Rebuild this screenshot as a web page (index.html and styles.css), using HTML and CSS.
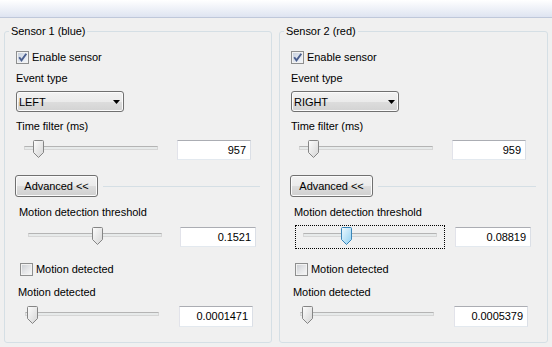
FILE: index.html
```html
<!DOCTYPE html>
<html>
<head>
<meta charset="utf-8">
<link rel="stylesheet" href="styles.css">
</head>
<body>
<div class="topbar"></div>
<div class="groups">
  <fieldset class="group g1">
    <legend>Sensor 1 (blue)</legend>
    <div class="check row-enable">
      <span class="cb on"><svg width="11" height="11" viewBox="0 0 11 11"><defs><linearGradient id="tg" x1="0" y1="0" x2="1" y2="1"><stop offset="0" stop-color="#fdfdfd"/><stop offset="1" stop-color="#d4d4d4"/></linearGradient><linearGradient id="tb" x1="0" y1="0" x2="1" y2="1"><stop offset="0" stop-color="#eef9fe"/><stop offset="1" stop-color="#8fd0f2"/></linearGradient></defs><path d="M2.2 5.2 L4.5 8.4 L9.3 1.8" fill="none" stroke="#4a5e8e" stroke-width="1.9"/></svg></span>
      <span>Enable sensor</span>
    </div>
    <div class="label l-event">Event type</div>
    <div class="combo"><span>LEFT</span><svg class="arrow" width="7" height="4" viewBox="0 0 7 4"><path d="M0 0 H7 L3.5 4 Z" fill="#000"/></svg></div>
    <div class="label l-time">Time filter (ms)</div>
    <div class="slrow s1">
      <div class="slider"><div class="track"></div><svg class="thumb" style="left:16px" width="11" height="18" viewBox="0 0 11 18"><path d="M0.5 1.5 Q0.5 0.5 1.5 0.5 H9.5 Q10.5 0.5 10.5 1.5 V12.5 L5.5 17.5 L0.5 12.5 Z" fill="url(#tg)" stroke="#858585"/></svg></div>
      <div class="edit">957</div>
    </div>
    <div class="advrow"><div class="btn">Advanced &lt;&lt;</div><div class="sep"></div></div>
    <div class="label l-thr">Motion detection threshold</div>
    <div class="slrow s2">
      <div class="slider"><div class="track"></div><svg class="thumb" style="left:71px" width="11" height="18" viewBox="0 0 11 18"><path d="M0.5 1.5 Q0.5 0.5 1.5 0.5 H9.5 Q10.5 0.5 10.5 1.5 V12.5 L5.5 17.5 L0.5 12.5 Z" fill="url(#tg)" stroke="#858585"/></svg></div>
      <div class="edit">0.1521</div>
    </div>
    <div class="check check2">
      <span class="cb"></span>
      <span>Motion detected</span>
    </div>
    <div class="label l-md">Motion detected</div>
    <div class="slrow s3">
      <div class="slider"><div class="track"></div><svg class="thumb" style="left:9px" width="11" height="18" viewBox="0 0 11 18"><path d="M0.5 1.5 Q0.5 0.5 1.5 0.5 H9.5 Q10.5 0.5 10.5 1.5 V12.5 L5.5 17.5 L0.5 12.5 Z" fill="url(#tg)" stroke="#858585"/></svg></div>
      <div class="edit">0.0001471</div>
    </div>
  </fieldset>

  <fieldset class="group g2">
    <legend>Sensor 2 (red)</legend>
    <div class="check row-enable">
      <span class="cb on"><svg width="11" height="11" viewBox="0 0 11 11"><path d="M2.2 5.2 L4.5 8.4 L9.3 1.8" fill="none" stroke="#4a5e8e" stroke-width="1.9"/></svg></span>
      <span>Enable sensor</span>
    </div>
    <div class="label l-event">Event type</div>
    <div class="combo"><span>RIGHT</span><svg class="arrow" width="7" height="4" viewBox="0 0 7 4"><path d="M0 0 H7 L3.5 4 Z" fill="#000"/></svg></div>
    <div class="label l-time">Time filter (ms)</div>
    <div class="slrow s1">
      <div class="slider"><div class="track"></div><svg class="thumb" style="left:16px" width="11" height="18" viewBox="0 0 11 18"><path d="M0.5 1.5 Q0.5 0.5 1.5 0.5 H9.5 Q10.5 0.5 10.5 1.5 V12.5 L5.5 17.5 L0.5 12.5 Z" fill="url(#tg)" stroke="#858585"/></svg></div>
      <div class="edit">959</div>
    </div>
    <div class="advrow"><div class="btn">Advanced &lt;&lt;</div><div class="sep"></div></div>
    <div class="label l-thr">Motion detection threshold</div>
    <div class="slrow s2">
      <div class="slider focus"><div class="track"></div><svg class="thumb" style="left:45px" width="11" height="18" viewBox="0 0 11 18"><path d="M0.5 1.5 Q0.5 0.5 1.5 0.5 H9.5 Q10.5 0.5 10.5 1.5 V12.5 L5.5 17.5 L0.5 12.5 Z" fill="url(#tb)" stroke="#3b86b9"/></svg></div>
      <div class="edit">0.08819</div>
    </div>
    <div class="check check2">
      <span class="cb"></span>
      <span>Motion detected</span>
    </div>
    <div class="label l-md">Motion detected</div>
    <div class="slrow s3">
      <div class="slider"><div class="track"></div><svg class="thumb" style="left:9px" width="11" height="18" viewBox="0 0 11 18"><path d="M0.5 1.5 Q0.5 0.5 1.5 0.5 H9.5 Q10.5 0.5 10.5 1.5 V12.5 L5.5 17.5 L0.5 12.5 Z" fill="url(#tg)" stroke="#858585"/></svg></div>
      <div class="edit">0.0005379</div>
    </div>
  </fieldset>
</div>
</body>
</html>
```

FILE: styles.css
```css
html, body {
  margin: 0;
  padding: 0;
}
body {
  width: 552px;
  height: 347px;
  overflow: hidden;
  background: #f0f0f0;
  font-family: "Liberation Sans", Arial, sans-serif;
  font-size: 11px;
  letter-spacing: -0.05px;
  color: #000;
}
.topbar {
  height: 17px;
  background: linear-gradient(#ffffff, #dee4f1);
  border-bottom: 1px solid #bfc8da;
}
.groups {
  display: flex;
  gap: 7px;
  padding: 7px 4px 0;
}
.group {
  box-sizing: border-box;
  margin: 0;
  padding: 0 11px 14px;
  border: 1px solid #d5dfe5;
  border-radius: 3px;
  min-width: 0;
}
.g1 { flex: 0 0 268px; }
.g2 { flex: 1 1 auto; }
legend {
  padding: 0 2px;
  margin-left: -7px;
  line-height: 13px;
}
.label {
  height: 13px;
  line-height: 13px;
  white-space: nowrap;
}
.check {
  display: flex;
  align-items: center;
  height: 13px;
  line-height: 13px;
  white-space: nowrap;
}
.cb {
  flex: none;
  box-sizing: border-box;
  width: 13px;
  height: 13px;
  margin-right: 3px;
  border: 1px solid #8e8f8f;
  background: linear-gradient(135deg, #c9ccd1 0%, #e6e7e9 55%, #f8f8f8 100%);
  box-shadow: inset 0 0 0 1px #f2f2f2;
  display: flex;
}
.cb.on {
  background: linear-gradient(135deg, #c4cddb 0%, #e4e9f1 60%, #f6f8fb 100%);
}
.cb svg { display: block; }
.row-enable { margin-top: 13px; }
.l-event { margin-top: 8px; }
.combo {
  box-sizing: border-box;
  margin-top: 6px;
  width: 108px;
  height: 21px;
  padding: 0 3px 0 2px;
  border: 1px solid #707070;
  border-radius: 3px;
  background: linear-gradient(#f2f2f2 0%, #ebebeb 50%, #dddddd 51%, #d3d3d3 100%);
  box-shadow: inset 0 0 0 1px #fbfbfb;
  display: flex;
  align-items: center;
  justify-content: space-between;
}
.arrow { display: block; }
.l-time { margin-top: 8px; }
.slrow {
  display: flex;
  align-items: flex-start;
}
.slider {
  position: relative;
  flex: none;
  box-sizing: border-box;
  width: 150px;
  height: 24px;
  border: 1px dotted transparent;
}
.slider.focus { border-color: #000; }
.track {
  position: absolute;
  left: 7px;
  right: 7px;
  top: 7px;
  height: 4px;
  box-sizing: border-box;
  border: 1px solid #d6d6d6;
  border-top-color: #b4b4b4;
  background: #e7eaea;
}
.thumb {
  position: absolute;
  top: 1px;
  display: block;
}
.edit {
  box-sizing: border-box;
  height: 20px;
  margin-top: 2px;
  padding-right: 4px;
  border: 1px solid;
  border-color: #abadb3 #dbdfe6 #e3e9ef #e2e3ea;
  background: #fff;
  text-align: right;
  line-height: 18px;
  white-space: nowrap;
}
.s1 { margin-top: 5px; }
.s1 .edit { margin-left: 11px; width: 74px; }
.advrow {
  display: flex;
  align-items: center;
  margin-top: 13px;
  margin-left: -1px;
}
.btn {
  box-sizing: border-box;
  width: 83px;
  height: 22px;
  border: 1px solid #707070;
  border-radius: 3px;
  background: linear-gradient(#f2f2f2 0%, #ebebeb 50%, #dddddd 51%, #cfcfcf 100%);
  box-shadow: inset 0 0 0 1px #fbfbfb;
  display: flex;
  align-items: center;
  justify-content: center;
  white-space: nowrap;
}
.sep {
  flex: 1;
  margin-left: 5px;
  height: 0;
  border-top: 1px solid #d5dfe5;
}
.l-thr { margin-top: 9px; margin-left: 3px; }
.s2 { margin-top: 6px; margin-left: 4px; }
.s2 .edit { margin-left: 10px; width: 76px; }
.check2 { margin-top: 14px; margin-left: 4px; }
.l-md { margin-top: 10px; margin-left: 2px; }
.s3 { margin-top: 5px; margin-left: 1px; }
.s3 .edit { margin-left: 12px; width: 74px; height: 21px; line-height: 19px; }
```
